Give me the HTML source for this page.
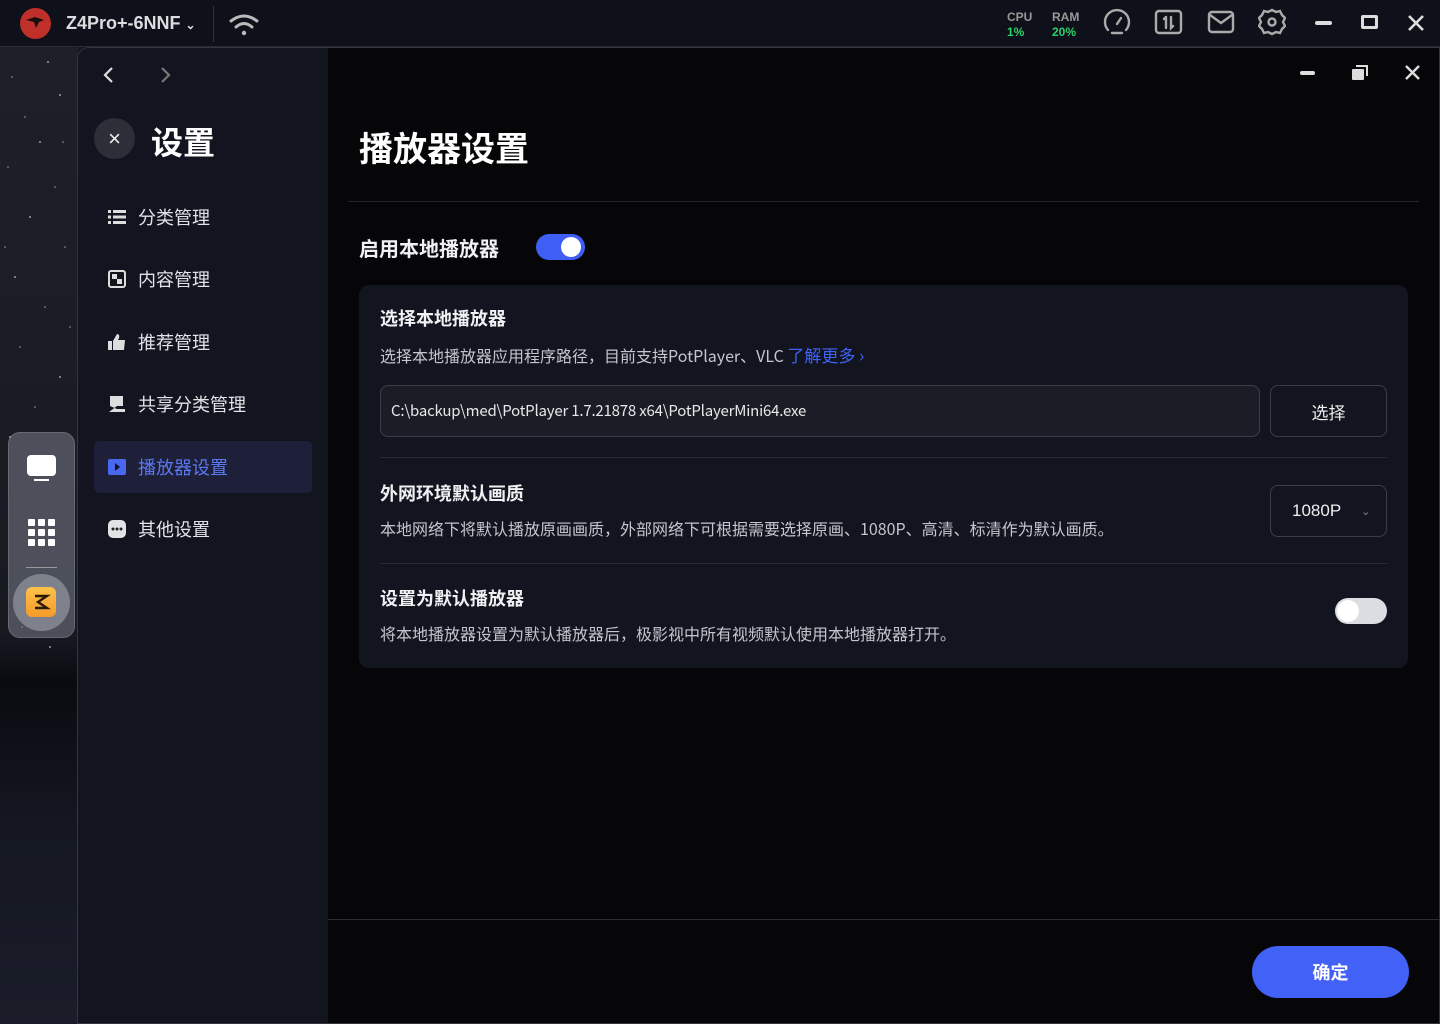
<!DOCTYPE html>
<html><head><meta charset="utf-8"><style>
*{margin:0;padding:0;box-sizing:border-box}
body{width:1440px;height:1024px;overflow:hidden;background:#15171f;font-family:"Liberation Sans","Noto Sans CJK SC",sans-serif;color:#e6e7ea;position:relative}
.abs{position:absolute}
#top{left:0;top:0;width:1440px;height:47px;background:#0f111a;border-bottom:1px solid #2a2c33}
#strip{left:0;top:47px;width:78px;height:977px;background:linear-gradient(180deg,#1e2029 0%,#181a22 60%,#0a0b10 65%,#141722 80%,#1a1d29 100%)}
#win{left:77px;top:47px;width:1363px;height:977px;border-top-left-radius:12px;border:1px solid #34363d;overflow:hidden;background:#060609}
#side{left:0;top:0;width:250px;height:100%;background:#121420}
.item{position:absolute;left:16px;width:218px;height:52px;display:flex;align-items:center;padding-left:14px;font-size:18px;color:#e2e3e6}
.item .ic{width:18px;height:18px;margin-right:12px;display:flex;align-items:center;justify-content:center}
.card{left:281px;top:237px;width:1049px;height:383px;background:#121420;border-radius:10px}
.h{font-family:"Noto Sans CJK SC",sans-serif;font-size:18px;font-weight:bold;color:#f0f1f3;line-height:1.2}
.d{font-family:"Noto Sans CJK SC",sans-serif;font-size:16px;color:#c4c6cc;line-height:1.2}
.btn{border:1px solid #3c3e47;border-radius:8px;background:#12141f;display:flex;align-items:center;justify-content:center;font-size:17px;color:#eee}
</style></head><body>
<div id="top" class="abs">
  <div class="abs" style="left:20px;top:8px;width:31px;height:31px;border-radius:50%;background:#c0302a"></div>
  <svg class="abs" style="left:20px;top:8px" width="31" height="31"><path d="M6 12 L15 9 L24 12 L19 14 L16 20 L14 14 Z" fill="#1a0d0d"/></svg>
  <div class="abs" style="left:66px;top:13px;font-size:18px;font-weight:bold;color:#dcdde0">Z4Pro+-6NNF <span style="font-size:12px">⌄</span></div>
  <div class="abs" style="left:213px;top:6px;width:1px;height:36px;background:#2e3038"></div>
  <svg class="abs" style="left:228px;top:12px" width="32" height="26" fill="none" stroke="#bbb" stroke-width="3" stroke-linecap="round"><path d="M3 9 Q16 -1 29 9"/><path d="M8 15 Q16 8 24 15"/><circle cx="16" cy="21" r="2.2" fill="#bbb" stroke="none"/></svg>
  <div class="abs" style="left:1007px;top:10px;font-size:12px;font-weight:bold;color:#999;line-height:15px">CPU<br><span style="color:#2fcf6a">1%</span></div>
  <div class="abs" style="left:1052px;top:10px;font-size:12px;font-weight:bold;color:#999;line-height:15px">RAM<br><span style="color:#2fcf6a">20%</span></div>
  <svg class="abs" style="left:1101px;top:7px" width="32" height="32" fill="none" stroke="#aaa" stroke-width="2.4" stroke-linecap="round"><path d="M7 23 A12 12 0 1 1 25 23"/><path d="M16 17 L20 11"/><path d="M11 26 H21"/></svg>
  <svg class="abs" style="left:1154px;top:9px" width="29" height="27" fill="none" stroke="#aaa" stroke-width="2.4"><rect x="2" y="2" width="25" height="22" rx="3"/><path d="M12 8 V19 M10 10 L12 8 M17 8 V19 L19 17" stroke-linecap="round"/></svg>
  <svg class="abs" style="left:1207px;top:10px" width="28" height="24" fill="none" stroke="#aaa" stroke-width="2.4"><rect x="2" y="2" width="24" height="20" rx="3"/><path d="M3 5 L14 13 L25 5"/></svg>
  <svg class="abs" style="left:1258px;top:7px" width="28" height="30" fill="none" stroke="#aaa" stroke-width="2.4"><path d="M14 3 L18 5 L22 4 L24 8 L27 11 L25 15 L27 19 L24 22 L22 26 L18 25 L14 27 L10 25 L6 26 L4 22 L1 19 L3 15 L1 11 L4 8 L6 4 L10 5 Z"/><circle cx="14" cy="15" r="3.5"/></svg>
  <div class="abs" style="left:1315px;top:21px;width:17px;height:4px;border-radius:2px;background:#ddd"></div>
  <div class="abs" style="left:1361px;top:15px;width:17px;height:14px;border:3px solid #ddd;border-radius:2px"></div>
  <svg class="abs" style="left:1407px;top:14px" width="18" height="18" stroke="#ddd" stroke-width="2.6"><path d="M2 2 L16 16 M16 2 L2 16"/></svg>
</div>
<div id="strip" class="abs"></div>
<svg class="abs" style="left:0;top:47px" width="78" height="620">
  <g fill="#cfd3e0" opacity=".7">
  <circle cx="48" cy="15" r="1"/><circle cx="12" cy="30" r=".8"/><circle cx="60" cy="48" r="1"/><circle cx="25" cy="70" r=".8"/><circle cx="40" cy="95" r="1"/><circle cx="8" cy="120" r=".8"/><circle cx="55" cy="140" r=".8"/><circle cx="30" cy="170" r="1"/><circle cx="65" cy="200" r=".8"/><circle cx="15" cy="230" r="1"/><circle cx="45" cy="260" r=".8"/><circle cx="20" cy="300" r=".8"/><circle cx="60" cy="330" r="1"/><circle cx="35" cy="360" r=".8"/><circle cx="10" cy="390" r="1"/><circle cx="50" cy="600" r="1"/><circle cx="22" cy="580" r=".8"/><circle cx="63" cy="95" r=".8"/><circle cx="5" cy="200" r=".8"/><circle cx="70" cy="280" r=".8"/>
  </g></svg>
<div class="abs" style="left:8px;top:432px;width:67px;height:206px;border-radius:12px;background:rgba(120,124,136,.55);border:1px solid rgba(255,255,255,.15)"></div>
<div class="abs" style="left:27px;top:455px;width:29px;height:21px;border-radius:4px;background:#fff"></div>
<div class="abs" style="left:34px;top:479px;width:15px;height:2px;background:#fff"></div>
<svg class="abs" style="left:28px;top:519px" width="27" height="27" fill="#fff"><rect x="0" y="0" width="7" height="7" rx="1"/><rect x="10" y="0" width="7" height="7" rx="1"/><rect x="20" y="0" width="7" height="7" rx="1"/><rect x="0" y="10" width="7" height="7" rx="1"/><rect x="10" y="10" width="7" height="7" rx="1"/><rect x="20" y="10" width="7" height="7" rx="1"/><rect x="0" y="20" width="7" height="7" rx="1"/><rect x="10" y="20" width="7" height="7" rx="1"/><rect x="20" y="20" width="7" height="7" rx="1"/></svg>
<div class="abs" style="left:26px;top:567px;width:31px;height:1px;background:#999"></div>
<div class="abs" style="left:13px;top:574px;width:57px;height:57px;border-radius:50%;background:rgba(160,163,172,.6)"></div>
<div class="abs" style="left:26px;top:587px;width:30px;height:30px;border-radius:6px;background:linear-gradient(#fdc34a,#f59a2c)"></div>
<svg class="abs" style="left:26px;top:587px" width="30" height="30" fill="none" stroke="#2a1a08" stroke-width="2.4"><path d="M9 9 L21 9 L12 15 L21 21 L9 21"/></svg>

<div id="win" class="abs">
  <div id="side" class="abs">
    <svg class="abs" style="left:24px;top:17px" width="14" height="20" fill="none" stroke="#ddd" stroke-width="2.2"><path d="M10 3 L3 10 L10 17"/></svg>
    <svg class="abs" style="left:80px;top:17px" width="14" height="20" fill="none" stroke="#777" stroke-width="2.2"><path d="M4 3 L11 10 L4 17"/></svg>
    <div class="abs" style="left:16px;top:70px;width:41px;height:41px;border-radius:50%;background:#2c2e38;color:#eee;font-size:22px;display:flex;align-items:center;justify-content:center">×</div>
    <div class="abs" style="left:73px;top:70px;font-size:32px;font-weight:bold;color:#fff">设置</div>
    <div class="item" style="top:143px"><span class="ic"><svg width="18" height="14" fill="#ddd"><rect x="0" y="0" width="3" height="3"/><rect x="5" y="0" width="13" height="3"/><rect x="0" y="5.5" width="3" height="3"/><rect x="5" y="5.5" width="13" height="3"/><rect x="0" y="11" width="3" height="3"/><rect x="5" y="11" width="13" height="3"/></svg></span>分类管理</div>
    <div class="item" style="top:205px"><span class="ic"><svg width="18" height="18"><rect x="1" y="1" width="16" height="16" rx="2" fill="none" stroke="#ddd" stroke-width="2"/><rect x="4" y="4" width="5" height="5" fill="#ddd"/><rect x="9" y="9" width="5" height="5" fill="#ddd"/></svg></span>内容管理</div>
    <div class="item" style="top:268px"><span class="ic"><svg width="18" height="18" fill="#ddd"><rect x="0" y="8" width="4" height="9"/><path d="M5 8 L9 1 Q12 1 11 5 L10 7 L17 7 L16 17 L5 17 Z"/></svg></span>推荐管理</div>
    <div class="item" style="top:330px"><span class="ic"><svg width="18" height="18" fill="#ddd"><path d="M2 1 H15 V11 H9 L5 14 L1 17 H17 V14 L9 14 L2 11 Z"/></svg></span>共享分类管理</div>
    <div class="item" style="top:393px;background:#1d2038;border-radius:5px;color:#5b78f2"><span class="ic"><svg width="18" height="16"><rect x="0" y="0" width="18" height="16" rx="2" fill="#4a67ef"/><path d="M7 4 L12 8 L7 12 Z" fill="#121420"/></svg></span>播放器设置</div>
    <div class="item" style="top:455px"><span class="ic"><svg width="18" height="18"><rect x="0" y="0" width="18" height="18" rx="5" fill="#e2e3e6"/><circle cx="5" cy="9" r="1.5" fill="#222"/><circle cx="9" cy="9" r="1.5" fill="#222"/><circle cx="13" cy="9" r="1.5" fill="#222"/></svg></span>其他设置</div>
  </div>
  <div class="abs" style="left:1222px;top:23px;width:15px;height:4px;border-radius:2px;background:#ddd"></div>
  <svg class="abs" style="left:1274px;top:17px" width="16" height="15" fill="#ddd"><path d="M4 0 H16 V11 H14 V2 H4 Z"/><rect x="0" y="4" width="12" height="11" rx="1"/></svg>
  <svg class="abs" style="left:1327px;top:17px" width="15" height="15" stroke="#ddd" stroke-width="2.4"><path d="M1 1 L14 14 M14 1 L1 14"/></svg>
  <div class="abs" style="left:281px;top:74px;font-size:34px;font-weight:bold;color:#fff">播放器设置</div>
  <div class="abs" style="left:270px;top:153px;width:1071px;height:1px;background:#23252c"></div>
  <div class="abs h" style="left:281px;top:188px;font-size:20px">启用本地播放器</div>
  <div class="abs" style="left:458px;top:186px;width:49px;height:26px;border-radius:13px;background:#3f5ef5"></div>
  <div class="abs" style="left:483px;top:189px;width:20px;height:20px;border-radius:50%;background:#fff"></div>
  <div class="card abs">
    <div class="abs h" style="left:21px;top:23px">选择本地播放器</div>
    <div class="abs d" style="left:21px;top:60px">选择本地播放器应用程序路径，目前支持PotPlayer、VLC <span style="color:#3f63f6;font-size:17px">了解更多 ›</span></div>
    <div class="abs" style="left:21px;top:100px;width:880px;height:52px;border:1px solid #3c3e47;border-radius:8px;background:#1b1d26;font-family:'Noto Sans CJK SC',sans-serif;font-size:15px;line-height:1.2;color:#e8e8ea;padding:16px 0 0 10px;letter-spacing:-0.2px">C:\backup\med\PotPlayer 1.7.21878 x64\PotPlayerMini64.exe</div>
    <div class="abs btn" style="left:911px;top:100px;width:117px;height:52px">选择</div>
    <div class="abs" style="left:21px;top:172px;width:1007px;height:1px;background:#262832"></div>
    <div class="abs h" style="left:21px;top:198px">外网环境默认画质</div>
    <div class="abs d" style="left:21px;top:234px">本地网络下将默认播放原画画质，外部网络下可根据需要选择原画、1080P、高清、标清作为默认画质。</div>
    <div class="abs btn" style="left:911px;top:200px;width:117px;height:52px;justify-content:flex-start;padding-left:21px">1080P<span style="margin-left:20px;font-size:11px;color:#888">⌄</span></div>
    <div class="abs" style="left:21px;top:278px;width:1007px;height:1px;background:#262832"></div>
    <div class="abs h" style="left:21px;top:303px">设置为默认播放器</div>
    <div class="abs d" style="left:21px;top:339px">将本地播放器设置为默认播放器后，极影视中所有视频默认使用本地播放器打开。</div>
    <div class="abs" style="left:976px;top:313px;width:52px;height:26px;border-radius:13px;background:#dcdde2"></div>
    <div class="abs" style="left:978px;top:315px;width:22px;height:22px;border-radius:50%;background:#fff"></div>
  </div>
  <div class="abs" style="left:250px;top:871px;width:1113px;height:1px;background:#2b2d33"></div>
  <div class="abs" style="left:1174px;top:898px;width:157px;height:52px;border-radius:26px;background:#4261f7;color:#fff;font-size:18px;font-weight:bold;display:flex;align-items:center;justify-content:center">确定</div>
</div>
</body></html>
